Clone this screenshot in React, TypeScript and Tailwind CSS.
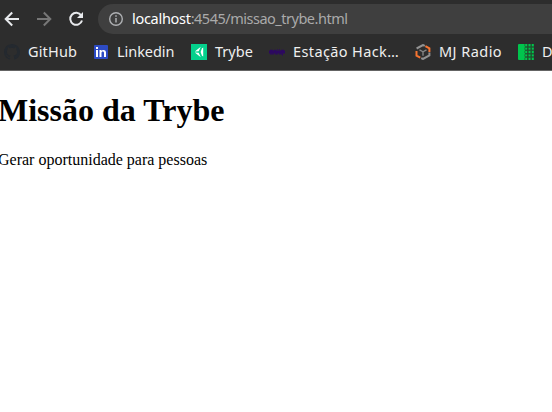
import type { ReactNode } from 'react';

function Bookmark({ icon, label, className }: { icon: ReactNode; label: string; className: string }) {
  return (
    <div className="flex shrink-0 items-center gap-2">
      <span className="h-4 w-4 shrink-0">{icon}</span>
      <span className={`shrink-0 whitespace-nowrap ${className}`}>{label}</span>
    </div>
  );
}

const GitHubIcon = () => (
  <svg width="16" height="16" viewBox="0 0 16 16" fill="#24292f">
    <path d="M8 0C3.58 0 0 3.58 0 8c0 3.54 2.29 6.53 5.47 7.59.4.07.55-.17.55-.38 0-.19-.01-.82-.01-1.49-2.01.37-2.53-.49-2.69-.94-.09-.23-.48-.94-.82-1.13-.28-.15-.68-.52-.01-.53.63-.01 1.08.58 1.23.82.72 1.21 1.87.87 2.33.66.07-.52.28-.87.51-1.07-1.78-.2-3.64-.89-3.64-3.95 0-.87.31-1.59.82-2.15-.08-.2-.36-1.02.08-2.12 0 0 .67-.21 2.2.82a7.6 7.6 0 0 1 4 0c1.53-1.04 2.2-.82 2.2-.82.44 1.1.16 1.92.08 2.12.51.56.82 1.27.82 2.15 0 3.07-1.87 3.75-3.65 3.95.29.25.54.73.54 1.48 0 1.07-.01 1.93-.01 2.2 0 .21.15.46.55.38A8 8 0 0 0 16 8c0-4.42-3.58-8-8-8z" />
  </svg>
);

const LinkedinIcon = () => (
  <svg width="16" height="16" viewBox="0 0 16 16">
    <rect x="1" y="1" width="14" height="14" rx="1" fill="#2d4bc4" />
    <path d="M3 6h2v7H3zM3 3h2v2H3zM6.5 6h2v1c1-1.6 4.5-1.6 4.5 1.5V13h-2V9c0-2-2.5-2-2.5 0v4h-2z" fill="#fff" />
  </svg>
);

const TrybeIcon = () => (
  <svg width="16" height="16" viewBox="0 0 16 16">
    <path d="M0 0h16v16H0z" fill="#04d08c" />
    <path d="M9.8 2.8L3.8 7.4l3.9-.1zM3.8 8.6l6 4.6-2.1-4.5zM11 4.2l1.2-.6v8.8l-1.2-.6L9.6 8z" fill="#fff" />
  </svg>
);

const HackIcon = () => (
  <svg width="16" height="16" viewBox="0 0 16 16" fill="none" stroke="#2c0860">
    <path d="M0 8h16" strokeWidth="3" />
    <path d="M1 6.4h3M5 6.4h2M8 5.8h1M10 5.8h1M12 6.4h3M1 9.8h4M6 9.8h3M10 9.8h4M13 10.8h1" strokeWidth="1.2" />
  </svg>
);

const RadioIcon = () => (
  <svg width="16" height="16" viewBox="0 0 16 16" fill="none" strokeWidth="2">
    <path d="M1.6 4.5L8 1l1.8.9M14.4 8.5v3L8 15l-1.8-.9" stroke="#929292" />
    <path d="M10.4 2.1l4 2.3v3.5M1.5 7v4.6L5.3 13.7" stroke="#f77430" />
    <path d="M4.5 5.9L8 7.8l3.5-1.9M8 7.8v4" stroke="#858585" strokeWidth="1.4" />
  </svg>
);

const GreenIcon = () => (
  <svg width="16" height="16" viewBox="0 0 16 16">
    <path d="M1 0h6v16H1q-1 0-1-1V1q0-1 1-1z" fill="#00c54d" />
    <path d="M7 0v16M10 0v16M13 0v16" stroke="#19622f" strokeWidth="1" strokeDasharray="2.4 1" />
    <path d="M8.2 0v16M11.5 0v16M14.8 0v16" stroke="#00c54d" strokeWidth="2" strokeDasharray="2.4 1" />
    <path d="M7 3h9M7 6.4h9M7 9.8h9M7 13.2h9" stroke="#176e34" strokeWidth=".7" />
  </svg>
);

export default function App() {
  return (
    <div className="flex h-[412px] w-[552px] flex-col overflow-hidden bg-white">
      <header className="h-[71px] shrink-0 border-b border-[#646464] bg-[#2d2d2d] pt-1 font-['Noto_Sans',sans-serif]">
        <div className="flex h-[30px] items-center">
          <div className="flex w-[98px] shrink-0 items-center gap-4 pl-1">
            <svg width="16" height="16" viewBox="0 0 16 16" fill="none" stroke="#e8eaed" strokeWidth="2"><path d="M15 8H2M8.2 1.5L1.7 8l6.5 6.5" /></svg>
            <svg width="16" height="16" viewBox="0 0 16 16" fill="none" stroke="#777" strokeWidth="2"><path d="M1 8h13M7.8 1.5L14.3 8l-6.5 6.5" /></svg>
            <svg width="16" height="16" viewBox="0 0 16 16" fill="none" stroke="#e8eaed" strokeWidth="2"><path d="M13.2 4.4A6 6 0 1 0 14 9.5" /><path d="M15 1v6H9z" fill="#e8eaed" stroke="none" /></svg>
          </div>
          <div className="flex h-[30px] grow items-center gap-2 rounded-l-full bg-[#3f3f3f] pl-[10px]">
            <svg className="shrink-0" width="16" height="16" viewBox="0 0 16 16" fill="none" stroke="#aeb0b3"><circle cx="8" cy="8" r="6.3" strokeWidth="1.4" /><path d="M8 7v4.5M8 4.2v1.5" strokeWidth="1.5" /></svg>
            <span className="-mt-px whitespace-nowrap text-[14.5px] tracking-[-0.49px] text-[#aaa]"><span className="tracking-[-0.29px] text-white">localhost</span>:4545/missao_trybe.html</span>
          </div>
        </div>
        <nav className="flex h-9 items-center pl-1 text-[14.5px] text-[#efefef]">
          <Bookmark icon={<GitHubIcon />} label="GitHub" className="w-[65px] tracking-[0.15px]" />
          <Bookmark icon={<LinkedinIcon />} label="Linkedin" className="w-[74px] tracking-[-0.05px]" />
          <Bookmark icon={<TrybeIcon />} label="Trybe" className="w-[54px]" />
          <Bookmark icon={<HackIcon />} label="Estação Hack…" className="w-[122px] tracking-[0.38px]" />
          <Bookmark icon={<RadioIcon />} label="MJ Radio" className="w-[79px] tracking-[0.45px]" />
          <Bookmark icon={<GreenIcon />} label="D" className="w-4" />
        </nav>
      </header>
      <main className="-ml-0.5 pt-[21px] font-['Liberation_Serif',serif] text-black">
        <h1 className="text-[32px] leading-[37px] font-bold">Missão da Trybe</h1>
        <p className="mt-[22px] text-base leading-[18px]">Gerar oportunidade para pessoas</p>
      </main>
    </div>
  );
}
